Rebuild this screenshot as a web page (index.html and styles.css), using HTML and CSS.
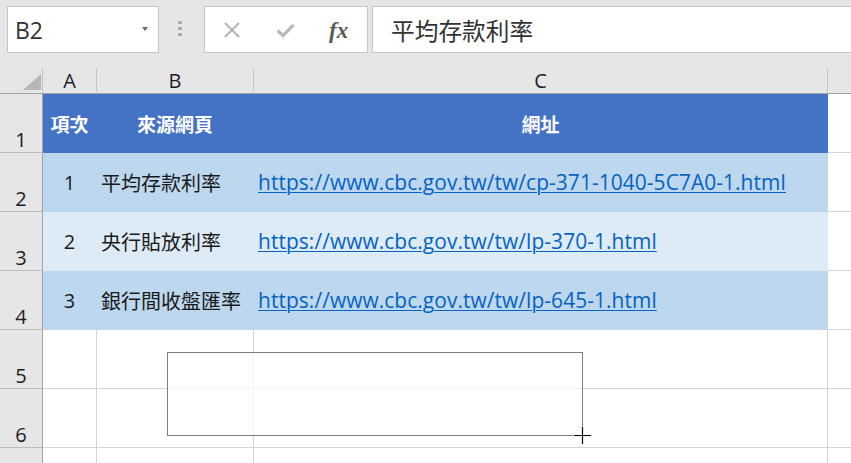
FILE: index.html
```html
<!DOCTYPE html>
<html lang="zh-Hant">
<head>
<meta charset="utf-8">
<title>Excel</title>
<link rel="stylesheet" href="styles.css">
</head>
<body>
<div class="app">
  <div class="fbar">
    <div class="namebox"><span class="ref">B2</span><span class="caret"></span></div>
    <div class="grip"><i></i><i></i><i></i></div>
    <div class="btns">
      <svg class="ic-x" width="16" height="16" viewBox="0 0 16 16"><path d="M1 1 L15 15 M15 1 L1 15" stroke="#b4b4b4" stroke-width="2" fill="none"/></svg>
      <svg class="ic-ok" width="19" height="15" viewBox="0 0 19 15"><path d="M1.5 7.5 L7 12.5 L17.5 2" stroke="#b9b9b9" stroke-width="3.2" fill="none"/></svg>
      <span class="fx">fx</span>
    </div>
    <div class="finput">平均存款利率</div>
  </div>
  <div class="sheet">
    <div class="grid">
      <div class="corner"><svg width="18" height="16" viewBox="0 0 18 16"><path d="M0 16 L18 16 L18 0 Z" fill="#b7b7b7"/></svg></div>
      <div class="ch">A</div>
      <div class="ch">B</div>
      <div class="ch">C</div>
      <div class="ch chd"></div>

      <div class="rh">1</div>
      <div class="c rhd center">項次</div>
      <div class="c rhd center">來源網頁</div>
      <div class="c rhd center">網址</div>
      <div class="c d"></div>

      <div class="rh">2</div>
      <div class="c ra center">1</div>
      <div class="c ra left">平均存款利率</div>
      <div class="c ra left"><a class="link" href="#">https://www.cbc.gov.tw/tw/cp-371-1040-5C7A0-1.html</a></div>
      <div class="c d"></div>

      <div class="rh">3</div>
      <div class="c rb center">2</div>
      <div class="c rb left">央行貼放利率</div>
      <div class="c rb left"><a class="link" href="#">https://www.cbc.gov.tw/tw/lp-370-1.html</a></div>
      <div class="c d"></div>

      <div class="rh">4</div>
      <div class="c ra center">3</div>
      <div class="c ra left">銀行間收盤匯率</div>
      <div class="c ra left"><a class="link" href="#">https://www.cbc.gov.tw/tw/lp-645-1.html</a></div>
      <div class="c d"></div>

      <div class="rh">5</div>
      <div class="c w"></div>
      <div class="c w"></div>
      <div class="c w"></div>
      <div class="c d"></div>

      <div class="rh">6</div>
      <div class="c w"></div>
      <div class="c w"></div>
      <div class="c w"></div>
      <div class="c d"></div>

      <div class="rh rh-last"></div>
      <div class="c w7"></div>
      <div class="c w7"></div>
      <div class="c w7"></div>
      <div class="c d7"></div>
    </div>
    <div class="shape"></div>
    <svg class="cursor" width="21" height="21" viewBox="0 0 21 21">
      <path d="M10.5 1.5 V19.5 M1.5 10.5 H19.5" stroke="#ffffff" stroke-width="3" fill="none"/>
      <path d="M10.5 2 V19 M2 10.5 H19" stroke="#000000" stroke-width="1.2" fill="none"/>
    </svg>
  </div>
</div>
</body>
</html>
```

FILE: styles.css
```css
html, body {
  margin: 0;
  padding: 0;
}
body {
  width: 851px;
  height: 463px;
  overflow: hidden;
  background: #e6e6e6;
  font-family: "Open Sans", "Noto Sans CJK TC", sans-serif;
  color: #1a1a1a;
}
.app {
  width: 851px;
  height: 463px;
  display: flex;
  flex-direction: column;
}

/* formula bar */
.fbar {
  height: 68px;
  box-sizing: border-box;
  padding-top: 6px;
  display: flex;
  align-items: flex-start;
  flex: none;
}
.namebox {
  margin-left: 7px;
  width: 152px;
  height: 47px;
  box-sizing: border-box;
  border: 1px solid #c6c6c6;
  background: #fff;
  display: flex;
  align-items: center;
  padding-left: 7px;
  padding-right: 10px;
}
.ref {
  font-size: 23px;
  color: #333;
  line-height: 1;
  margin-top: 1px;
}
.caret {
  margin-left: auto;
  width: 0;
  height: 0;
  border-left: 3.5px solid transparent;
  border-right: 3.5px solid transparent;
  border-top: 4px solid #6a6a6a;
  margin-top: -2px;
}
.grip {
  margin-left: 19px;
  margin-top: 15px;
  display: flex;
  flex-direction: column;
  gap: 3px;
}
.grip i {
  display: block;
  width: 4px;
  height: 3px;
  background: #aaaaaa;
}
.btns {
  margin-left: 22px;
  width: 164px;
  height: 47px;
  box-sizing: border-box;
  border: 1px solid #c6c6c6;
  background: #fff;
  display: flex;
  align-items: center;
  padding-left: 19px;
}
.ic-x {
  margin-top: 1px;
}
.ic-ok {
  margin-left: 36px;
  margin-top: 2px;
}
.fx {
  margin-left: 34px;
  font-family: "Liberation Serif", "DejaVu Serif", serif;
  font-style: italic;
  font-weight: bold;
  font-size: 23px;
  color: #5a5a5a;
  line-height: 1;
  margin-top: 1px;
}
.finput {
  margin-left: 4px;
  flex: 1;
  margin-right: -2px;
  height: 47px;
  box-sizing: border-box;
  border: 1px solid #c6c6c6;
  background: #fff;
  display: flex;
  align-items: center;
  padding-left: 18px;
  font-family: "Noto Sans CJK TC", sans-serif;
  font-size: 23.7px;
  color: #333;
}

/* sheet */
.sheet {
  position: relative;
  flex: 1;
}
.grid {
  display: grid;
  grid-template-columns: 43px 54px 157px 574px 1fr;
  grid-template-rows: 26px repeat(6, 59px) 1fr;
  height: 100%;
}
.grid > div {
  box-sizing: border-box;
  min-width: 0;
}
.corner {
  border-right: 1px solid #c2c2c2;
  border-bottom: 1px solid #a3a3a3;
  display: flex;
  justify-content: flex-end;
  align-items: flex-end;
  padding-right: 1px;
  padding-bottom: 3px;
}
.corner svg {
  display: block;
}
.ch {
  border-right: 1px solid #c6c6c6;
  border-bottom: 1px solid #a3a3a3;
  font-size: 20px;
  line-height: 25px;
  text-align: center;
  color: #1e1e1e;
}
.chd {
  border-right: none;
}
.rh {
  border-right: 1px solid #a3a3a3;
  border-bottom: 1px solid #bdbdbd;
  display: flex;
  justify-content: center;
  align-items: flex-end;
  font-size: 20px;
  line-height: 1;
  padding-bottom: 2px;
  color: #1e1e1e;
}
.rh-last {
  border-bottom: none;
}
.c {
  display: flex;
  align-items: center;
  font-size: 20px;
  border-right: 1px solid #d4d4d4;
  border-bottom: 1px solid #d4d4d4;
  background: #fff;
  white-space: nowrap;
  overflow: hidden;
}
.center {
  justify-content: center;
}
.left {
  padding-left: 4px;
}
.rhd {
  background: #4472c4;
  border-color: #4472c4;
  color: #fff;
  font-family: "Noto Sans CJK TC", sans-serif;
  font-weight: bold;
  font-size: 19px;
}
.ra {
  background: #bdd7ee;
  border-color: #bdd7ee;
}
.rb {
  background: #ddebf7;
  border-color: #ddebf7;
}
.d {
  border-right: none;
}
.w7 {
  border-bottom: none;
}
.d7 {
  border-right: none;
  border-bottom: none;
}
.link {
  color: #0563c1;
  text-decoration: underline;
  text-underline-offset: 2px;
  text-decoration-thickness: 1px;
  font-size: 20.9px;
  letter-spacing: 0.08px;
}

/* floating shape + cursor */
.shape {
  position: absolute;
  left: 167px;
  top: 284px;
  width: 416px;
  height: 84px;
  box-sizing: border-box;
  border: 1px solid #7f7f7f;
  background: rgba(255, 255, 255, 0.72);
}
.cursor {
  position: absolute;
  left: 572px;
  top: 357px;
  display: block;
}
```
